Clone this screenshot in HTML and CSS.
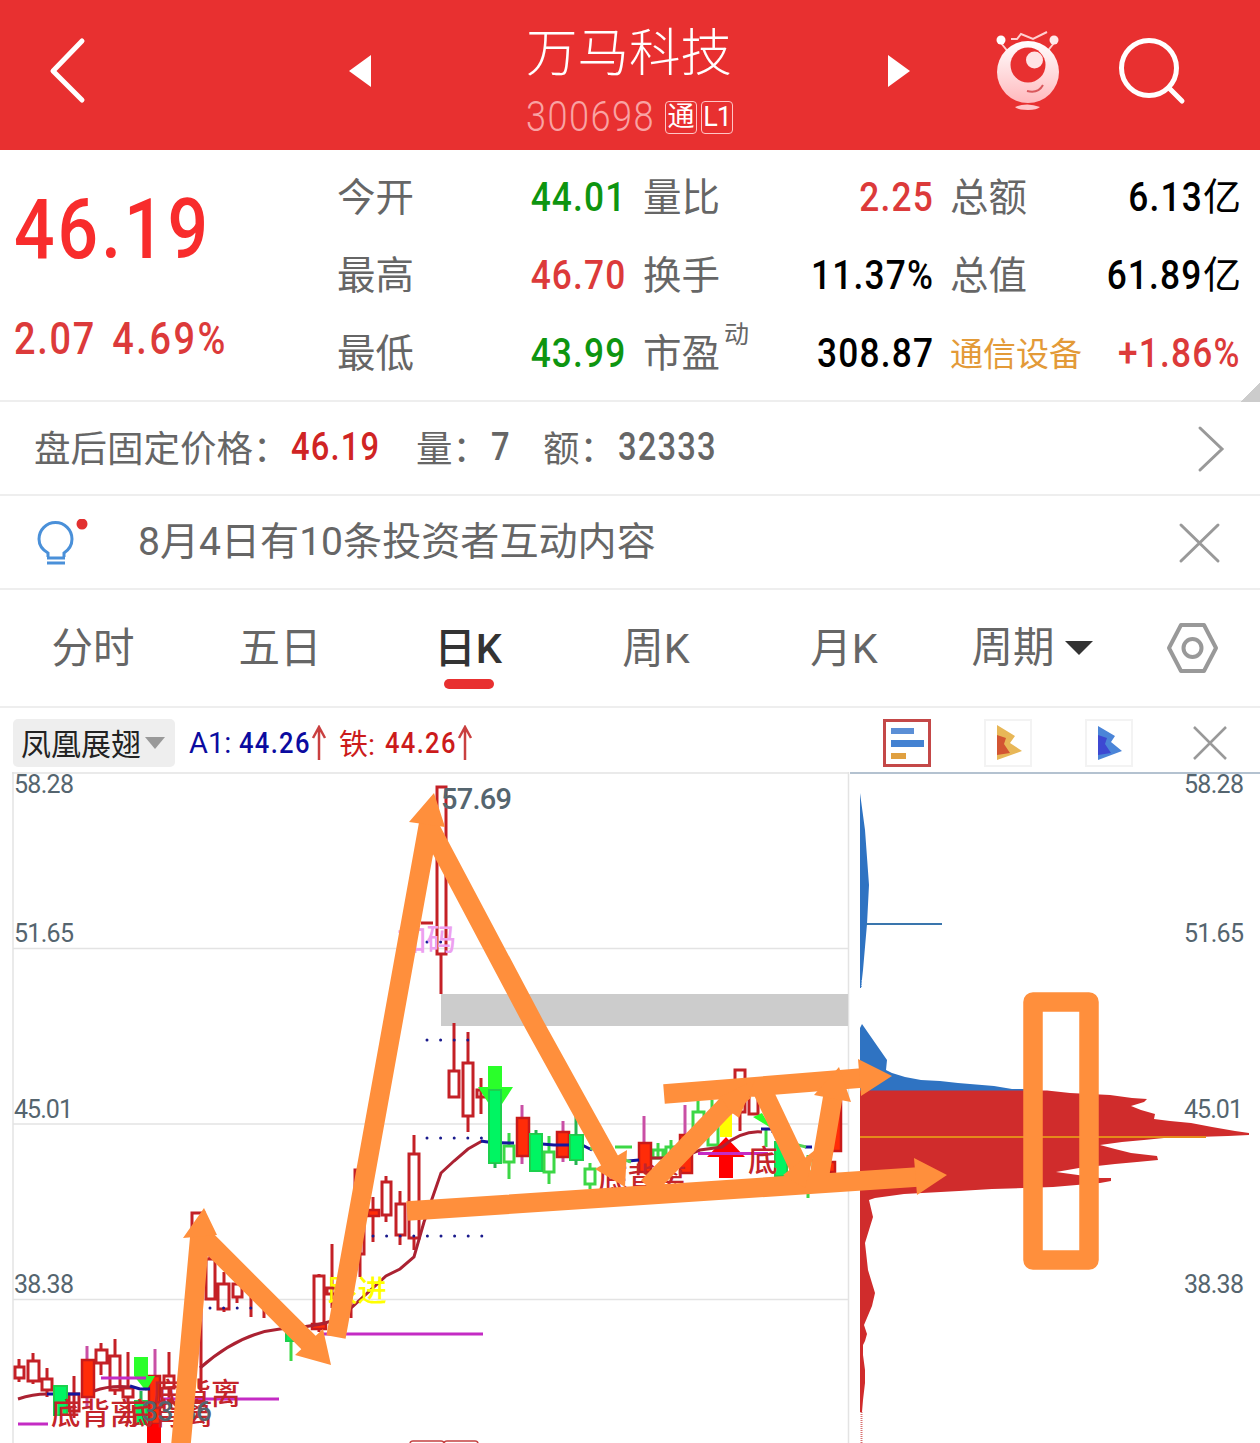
FILE: index.html
```
<!DOCTYPE html>
<html lang="zh-CN">
<head>
    <meta charset="UTF-8">
    <title>万马科技 300698</title>
    <link rel="stylesheet" href="styles.css">
</head>
<body>
<header class="header">
    <svg class="back" width="40" height="70" viewBox="0 0 40 70"><path d="M35 7L6 37L35 66"/></svg>
    <svg class="prev" width="24" height="34" viewBox="0 0 24 34"><path d="M24 1V33L2 17Z"/></svg>
    <div class="title">
        <h1>万马科技</h1>
        <div class="stock-code"><span class="code">300698</span><i class="badge">通</i><i class="badge level">L1</i></div>
    </div>
    <svg class="next" width="24" height="34" viewBox="0 0 24 34"><path d="M1 1V33L23 17Z"/></svg>
    <svg class="robot" width="70" height="84" viewBox="0 0 70 84">
        <defs><linearGradient id="face" x1="0" y1="0" x2="0" y2="1"><stop offset="0" stop-color="#fff"/><stop offset="1" stop-color="#ffb9bd"/></linearGradient></defs>
        <path class="antenna" d="M8 15L16 25M61 15L53 25"/>
        <circle cx="8" cy="12" r="4.5" fill="#fff"/><circle cx="61" cy="12" r="4.5" fill="#ffe9ea"/>
        <path class="zigzag" d="M18 11H24L28 6L40 11L54 4"/>
        <circle cx="35" cy="44" r="31" fill="url(#face)"/>
        <circle cx="35" cy="37" r="17.5" fill="#e83030"/>
        <circle cx="41.500" cy="32" r="8.500" fill="#ffe3e4"/>
        <path class="smile" d="M34 63Q45 66 50 57"/>
        <path d="M22 79Q34 74 47 79Q44 82 35 82Q25 82 22 79Z" fill="#ffc5c8"/>
    </svg>
    <svg class="search" width="70" height="70" viewBox="0 0 70 70"><circle cx="32" cy="32" r="27.500"/><path d="M52 52L65 65"/></svg>
</header>

<section class="quote">
    <div class="price">
        <strong>46.19</strong>
        <span>2.07<b>4.69%</b></span>
    </div>
    <div class="grid">
        <p><label>今开</label><span class="green">44.01</span></p>
        <p><label>量比</label><span class="red">2.25</span></p>
        <p><label>总额</label><span>6.13</span><em>亿</em></p>
        <p><label>最高</label><span class="red">46.70</span></p>
        <p><label>换手</label><span>11.37%</span></p>
        <p><label>总值</label><span>61.89</span><em>亿</em></p>
        <p><label>最低</label><span class="green">43.99</span></p>
        <p><label>市盈<sup>动</sup></label><span>308.87</span></p>
        <p><label class="sector">通信设备</label><span class="red">+1.86%</span></p>
    </div>
    <i class="corner"></i>
</section>

<section class="after">
    <span class="lbl">盘后固定价格：</span><span class="num deal">46.19</span>
    <span class="lbl">量：</span><span class="num vol">7</span>
    <span class="lbl">额：</span><span class="num">32333</span>
    <svg class="icon" width="28" height="48" viewBox="0 0 28 48"><path d="M3 3L25 24L3 45"/></svg>
</section>

<section class="notice">
    <svg class="bulb" width="54" height="50" viewBox="0 0 54 50">
        <path d="M12 38V34C5 30 3 25 3 20A16.500 16.500 0 0 1 36 20C36 25 34 30 28 34V38M11 39H29M11 44H29"/>
        <circle cx="46" cy="5" r="5.500"/>
    </svg>
    <span>8月4日有10条投资者互动内容</span>
    <svg class="icon" width="44" height="44" viewBox="0 0 44 44"><path d="M4 4L41 40M41 4L4 40"/></svg>
</section>

<nav class="tabs">
    <a>分时</a>
    <a>五日</a>
    <a class="active">日K</a>
    <a>周K</a>
    <a>月K</a>
    <a class="more">周期<i></i></a>
    <a class="setting"><svg width="58" height="54" viewBox="0 0 58 54"><path d="M17 4H40L52 27L40 50H17L5 27Z"/><circle cx="28.500" cy="27" r="9"/></svg></a>
</nav>

<div class="toolbar">
    <span class="indicator">凤凰展翅<i></i></span>
    <span class="a1">A1:<b>44.26</b></span><svg class="up" width="16" height="36" viewBox="0 0 16 36"><path d="M8 35V2M2 13L8 2L14 13"/></svg>
    <span class="tie"><em>铁:</em><b>44.26</b></span><svg class="up" width="16" height="36" viewBox="0 0 16 36"><path d="M8 35V2M2 13L8 2L14 13"/></svg>
    <div class="tools">
        <svg width="48" height="48" viewBox="0 0 48 48"><rect class="on" x="1.500" y="1.500" width="45" height="45"/><path fill="#5b8fd6" d="M8 9H31V15H8Z"/><path fill="#4482d2" d="M8 21H41V28H8Z"/><path fill="#e0a040" d="M8 34H23V40H8Z"/></svg>
        <svg width="48" height="48" viewBox="0 0 48 48"><rect class="off" x="1" y="1" width="46" height="46"/><path fill="#e8b757" d="M13 6L31 17L26 24L38 32L13 41Z"/><path fill="#d35532" d="M13 16L22 19L20 25L26 34L13 36Z"/></svg>
        <svg width="48" height="48" viewBox="0 0 48 48"><rect class="off" x="1" y="1" width="46" height="46"/><path fill="#4b85d8" d="M13 7L30 17L26 23L37 32L13 41Z"/><path fill="#3d48d2" d="M13 16L22 19L20 25L26 34L13 36Z"/></svg>
        <svg class="close" width="36" height="36" viewBox="0 0 36 36"><path d="M2 2L34 34M34 2L2 34"/></svg>
    </div>
</div>

<svg class="chart" width="1260" height="671" viewBox="0 772 1260 671">
    <!-- 网格 -->
    <path class="line" d="M13 772V1443M848.500 772V1443M12 773H848M13 948.500H848M13 1124H848M13 1299.500H848"/>
    <path d="M850 773H1260" stroke="#b4c2d0" stroke-width="2"/>
    <path d="M441 994H848V1026H441Z" fill="#ccc"/>
    <g class="axis">
        <text x="14" y="793" textLength="60">58.28</text>
        <text x="14" y="942" textLength="60">51.65</text>
        <text x="14" y="1118" textLength="59">45.01</text>
        <text x="14" y="1293" textLength="60">38.38</text>
        <text x="1184" y="793" textLength="60">58.28</text>
        <text x="1184" y="942" textLength="60">51.65</text>
        <text x="1184" y="1293" textLength="60">38.38</text>
    </g>

    <!-- 空心K线 -->
    <path class="k" d="M19 1359V1367M19 1378V1382M15 1367H24V1378H15ZM33 1353V1361M33 1381V1384M28 1361H39V1381H28ZM47 1368V1379M47 1390V1397M42 1379H52V1390H42ZM74 1376V1418M69 1394H79V1411H69ZM101 1343V1350M101 1363V1375M96 1350H107V1363H96ZM115 1339V1356M115 1390V1395M110 1356H120V1390H110ZM128 1352V1388M128 1397V1404M123 1388H133V1397H123ZM169 1352V1376M169 1388V1405M164 1376H174V1388H164Z"/>
    <path class="k" d="M192 1213H204V1260H192ZM201 1260V1392M210 1256V1259M206 1259H215V1299H206ZM224 1272V1284M218 1284H229V1309H218ZM224 1309V1312M237 1278V1284M233 1284H242V1297H233ZM237 1297V1303M251 1288V1317M246 1292H256M264 1302V1318M319 1274V1276M314 1276H324V1327H314ZM319 1327V1332M332 1244V1308M327 1288H337V1294H327ZM351 1250V1318M360 1200V1277M355 1170H364V1254H355ZM373 1197V1242M386 1176V1182M382 1182H391V1215H382ZM386 1215V1222M400 1191V1204M396 1204H405V1235H396ZM400 1235V1245M414 1135V1154M409 1154H419V1238H409ZM414 1238V1250"/>
    <path class="k" d="M437 787H446V954H437ZM441 954V994M421 923H433M454 1023V1071M449 1071H459V1097H449ZM468 1032V1063M463 1063H473V1116H463ZM468 1116V1132M481 1078V1114M477 1090H486V1097H477ZM735 1070H745V1112H735ZM740 1112V1131M749 1088H758V1114H749Z"/>
    <path class="solid" d="M368 1210H379V1216H368ZM286 1326H292V1329H286ZM312 1324H326V1329H312Z"/>
    <path class="gk" d="M291 1341V1361M509 1133V1146M504 1146H514V1162H504ZM509 1162V1179M549 1136V1152M544 1152H554V1172H544ZM549 1172V1184M590 1163V1169M585 1169H595V1184H585ZM590 1184V1189M615 1147H632M658 1143V1158M653 1150H663V1158H653ZM671 1140V1160M666 1147H676V1160H666ZM698 1100V1112M693 1112H704V1128H693ZM698 1128V1142M712 1100V1125M708 1125H718V1145H708ZM766 1130V1147M808 1155V1198M802 1160H813V1172H802Z"/>

    <!-- 实心K线 -->
    <path class="wick" d="M87 1346V1407M155 1349V1380M522 1105V1164M563 1121V1162M644 1116V1145M685 1105V1140"/>
    <path class="solid" d="M82 1360H94V1397H82ZM149 1376H160V1424H149ZM517 1118H529V1156H517ZM557 1132H569V1157H557ZM639 1143H651V1172H639ZM680 1135H692V1173H680ZM829 1100H841V1151H829ZM829 1162H835V1172H829Z"/>
    <path fill="#f00" d="M147 1424H161V1443H147ZM719 1157V1178H733V1157H745L726 1137L707 1157Z"/>
    <path fill="#2aff2a" d="M134 1357H148V1376H155L146 1391L134 1376ZM488 1066H502V1087H513L502 1104H489L478 1087H488ZM753 1117L762 1113L771 1128Z"/>
    <path fill="#ff0" d="M720 1110H732V1137H720Z"/>

    <!-- 均线 -->
    <path class="ma" d="M18 1399Q33 1394 47 1394M94 1391Q110 1385 130 1387M200 1368C225 1346 250 1332 280 1329C295 1328 315 1327 335 1320L352 1307L386 1276L400 1269L414 1257L424 1222L441 1173L454 1161L468 1149L482 1141M652 1158H680L700 1150L722 1147Q742 1130 762 1132"/>
    <path class="ma blue" d="M47 1394H80M130 1386L140 1389H150M481 1141Q490 1143 514 1143M542 1144L554 1145H582L592 1150M628 1161L639 1160M761 1129H773V1133M805 1147H812"/>
    <path class="ma lime" d="M590 1148L631 1162M790 1143L806 1147"/>
    <path class="gsolid" d="M54 1386H67V1415H54ZM135 1401H147V1424H135ZM286 1331H297V1341H286ZM489 1090H501V1163H489ZM530 1134H542V1171H530ZM570 1135H583V1160H570ZM775 1142H787V1176H775Z"/>
    <path class="gwick" d="M495 1163V1168M536 1130V1134M576 1115V1135M576 1160V1165M141 1391V1401"/>
    <path class="magenta" d="M18 1424H48M101 1378H146M160 1399H279M322 1334H483M698 1153.500H768"/>
    <path class="dots" d="M210 1308H266M427 942H442M427 1040H470M427 1138H484M373 1236H484"/>
    <g class="signal">
        <text x="51" y="1424">底背离</text>
        <text x="152" y="1404">底背离</text>
        <text x="124" y="1424">底背离</text>
        <text x="598" y="1189">底背离</text>
        <text x="748" y="1171">底</text>
        <text class="yellow" x="328" y="1301">跟进</text>
        <text class="pink" x="397" y="950">加码</text>
    </g>
    <g class="axis">
        <text class="low" x="142" y="1421" textLength="70">33.86</text>
        <text class="high" x="441" y="809" textLength="71">57.69</text>
    </g>
    <path class="tags" d="M410 1450V1444Q410 1441 413 1441H441Q444 1441 444 1444Q444 1441 447 1441H475Q478 1441 478 1444V1450"/>

    <!-- 筹码分布 -->
    <path fill="#2f73c2" d="M860 793L865 830L869 885L867 924L863 970L861 988H860ZM860 1028L862 1024L887 1060L886 1070L892 1073L905 1077L921 1080L940 1081L958 1083L994 1086L1012 1089H1030V1092H860Z"/>
    <path d="M866 924H942" stroke="#3a76ad" stroke-width="2"/>
    <path fill="#d02c2c" d="M860 1090.500H1047L1070 1093L1110 1095L1132 1098L1147 1099L1144 1102L1131 1106L1141 1110L1155 1114L1154 1119L1170 1121L1191 1123L1212 1127L1235 1131L1249 1133V1135L1228 1136L1164 1138L1144 1140L1122 1142L1100 1145L1115 1149L1131 1153L1157 1156L1158 1160L1137 1162L1115 1164L1079 1168L1056 1172L1078 1175L1100 1178H1111V1181L1100 1183L1053 1187L992 1189L959 1191L904 1194L875 1198L869 1200L873 1217L865 1243L868 1270L875 1293L872 1306L864 1325L867 1334L865 1341L863 1345V1355L865 1370V1383L863 1400L862 1412H860Z"/>
    <path d="M861.500 1412V1443" stroke="#d87070" stroke-width="2" stroke-dasharray="1 1"/>
    <path d="M861.500 980V988" stroke="#7ba7d8" stroke-width="1" stroke-dasharray="1 1"/>
    <path d="M860 1137H1206" stroke="#e58a1a" stroke-width="2"/>
    <g class="axis"><text x="1184" y="1118" textLength="59">45.01</text></g>

    <!-- 手绘标注 -->
    <g class="mark">
        <path d="M180 1455L200 1235M200 1234L311 1345M336 1337L429 822M428 824L534 1024L612 1165M664 1094L862 1078M407 1211L918 1177M648 1187L724 1108L745 1090M760 1085L797 1163L804 1182M818 1184L833 1096"/>
        <path class="tip" d="M183 1238L204 1208L217 1235ZM295 1355L331 1365L323 1329ZM409 822L434 793L445 827ZM595 1169L625 1187L627 1150ZM858 1059L892 1076L861 1096ZM914 1158L947 1175L917 1195ZM720 1097L755 1080L739 1118L731 1112ZM783 1175L805 1188L815 1150ZM814 1095L839 1067L851 1102Z"/>
        <rect x="1033" y="1002" width="56" height="258"/>
    </g>
</svg>
</body>
</html>
```
FILE: styles.css
```
* {
    box-sizing: border-box;
}

body {
    margin: 0;
    width: 1260px;
    height: 1443px;
    overflow: hidden;
    background: #fff;
    color: #666;
    font-family: Roboto, "Noto Sans CJK SC", sans-serif;
}

h1, p {
    margin: 0;
    font-weight: normal;
}

i, em {
    font-style: normal;
}

svg {
    display: block;
    flex: none;
    fill: none;
}

/* 顶部 */
.header {
    display: flex;
    height: 150px;
    background: #e83030;
    color: #fff;
}

.back {
    margin: 34px 0 0 47px;
    stroke: #fff;
    stroke-width: 5;
    stroke-linecap: round;
    stroke-linejoin: round;
}

.prev {
    margin: 54px 0 0 260px;
    fill: #fff;
}

.title {
    width: 209px;
    margin-left: 155px;
    flex: none;
}

.title h1 {
    margin-top: 24px;
    font-size: 51.5px;
    line-height: 60px;
    font-weight: 300;
    white-space: nowrap;
}

.stock-code {
    display: flex;
    align-items: center;
    height: 36px;
    margin-top: 15px;
    gap: 4px;
}

/* 数字压窄 */
.code {
    width: 135px;
    margin-top: -2px;
    font-size: 42px;
    font-weight: 300;
    letter-spacing: 1.7px;
    transform: scaleX(0.86);
    transform-origin: left;
    color: #f9a3a3;
}

.badge {
    width: 32px;
    height: 33px;
    flex: none;
    border: 1px solid #ffc5c5;
    border-radius: 4px;
    font-size: 27px;
    line-height: 31px;
    text-align: center;
}

.level {
    letter-spacing: -1px;
}

.next {
    margin: 54px 0 0 152px;
    fill: #fff;
}

.robot {
    margin: 28px 0 0 82px;
}

.antenna, .zigzag {
    stroke: #ffd0d0;
    stroke-width: 2;
}

.smile {
    stroke: #d9585c;
    stroke-width: 2;
}

.search {
    margin: 36px 0 0 54px;
    stroke: #fff;
    stroke-width: 5;
    stroke-linecap: round;
}

/* 行情 */
.quote {
    position: relative;
    display: flex;
    height: 252px;
    border-bottom: 2px solid #eee;
}

.price {
    width: 337px;
    padding: 32px 0 0 14px;
    color: #dc3a3a;
}

.price strong {
    display: block;
    font-size: 83px;
    line-height: 96px;
    font-weight: 500;
    letter-spacing: 3.5px;
    transform: scaleX(0.86);
    transform-origin: left;
    color: #f82c2c;
}

.price span {
    display: block;
    margin-top: 34px;
    font-size: 44px;
    line-height: 54px;
    font-weight: 500;
    letter-spacing: 2px;
    transform: scaleX(0.86);
    transform-origin: left;
    white-space: nowrap;
}

.price b {
    margin-left: 19px;
    font-weight: 500;
    letter-spacing: 3px;
}

.grid {
    display: grid;
    grid-template-columns: 290px 291px 291px;
    grid-auto-rows: 78px;
    column-gap: 16px;
    padding-top: 8px;
}

.grid p {
    display: flex;
    align-items: center;
    line-height: 78px;
    white-space: nowrap;
}

.grid label {
    display: flex;
    margin: 1px auto 0 0;
    font-size: 38.5px;
}

.grid span {
    font-size: 41px;
    font-weight: 500;
    letter-spacing: 1.4px;
    transform: scaleX(0.86);
    transform-origin: right;
    color: #000;
}

.grid em {
    font-size: 38px;
    color: #000;
}

.grid sup {
    margin: -19px 0 0 4px;
    font-size: 25px;
}

.grid .sector {
    margin-top: 3px;
    font-size: 33px;
    color: #e39a38;
}

.grid .red {
    color: #dc3a3a;
}

.grid .green {
    color: #0e9510;
}

.corner {
    position: absolute;
    right: 0;
    bottom: -2px;
    width: 20px;
    height: 20px;
    background: linear-gradient(135deg, transparent 50%, #ccc 50%);
}

/* 盘后 / 公告 */
.after, .notice {
    display: flex;
    align-items: center;
    height: 94px;
    padding: 0 36px 4px 34px;
    border-bottom: 2px solid #eee;
    font-size: 36.5px;
    white-space: nowrap;
}

.after .lbl {
    width: 63px;
    margin-right: 12px;
}

.after .lbl:first-child {
    width: 257px;
    margin-right: 0;
}

.num {
    margin-top: 2px;
    font-size: 38px;
    font-weight: 500;
    letter-spacing: 1.4px;
    transform: scaleX(0.86);
    transform-origin: left;
}

.after .deal {
    width: 125px;
    color: #d02424;
}

.after .vol {
    width: 52px;
}

.icon {
    margin-top: 5px;
    margin-left: auto;
    stroke: #999;
    stroke-width: 3;
    stroke-linecap: round;
}

.after .icon {
    margin-right: -1px;
}

.notice .icon {
    margin-right: 3px;
}

.bulb {
    margin: 7px 48px 0 2px;
}

.bulb path {
    stroke: #4a90d9;
    stroke-width: 3;
}

.bulb circle {
    fill: #e23030;
}

.notice span {
    margin-top: -4px;
    font-size: 39.1px;
}

/* 周期切换 */
.tabs {
    display: flex;
    height: 118px;
    border-bottom: 2px solid #eee;
    font-size: 41.5px;
    line-height: 118px;
}

.tabs a {
    position: relative;
    display: flex;
    justify-content: center;
    width: 188px;
}

.tabs a:first-child {
    width: 186px;
}

.tabs .active {
    color: #333;
    font-weight: 500;
}

.active::after {
    content: "";
    position: absolute;
    left: 70px;
    top: 89px;
    width: 50px;
    height: 10px;
    border-radius: 5px;
    background: #e83030;
}

.tabs .more, .tabs .setting {
    align-items: center;
}

.more i {
    margin-left: 10px;
    border: 14px solid transparent;
    border-top-color: #333;
    border-bottom: 0;
}

.tabs .setting {
    width: 134px;
}

.setting svg {
    stroke: #999;
    stroke-width: 4;
    stroke-linejoin: round;
}

/* 指标栏 */
.toolbar {
    display: flex;
    align-items: center;
    height: 64px;
    padding: 6px 33px 0 13px;
    font-size: 29px;
    white-space: nowrap;
}

.indicator {
    display: flex;
    align-items: center;
    width: 162px;
    height: 48px;
    padding: 0 0 3px 8px;
    margin-right: 14px;
    border-radius: 5px;
    background: #eee;
    color: #222;
    font-size: 30px;
}

.indicator i {
    margin: 3px 0 0 4px;
    border: 10px solid transparent;
    border-top: 12px solid #999;
    border-bottom: 0;
}

.toolbar b {
    display: inline-block;
    font-weight: 500;
    letter-spacing: 1.5px;
    transform: scaleX(0.88);
    transform-origin: left;
}

.a1 {
    width: 122px;
    color: #0b0ba0;
}

.a1 b {
    margin-left: 8px;
}

.tie {
    display: flex;
    align-items: center;
    width: 118px;
    margin-left: 12px;
    color: #cc1b1b;
}

.tie em {
    margin: -3px 10px 0 0;
}

.up {
    stroke: #c94040;
    stroke-width: 2.5;
}

.tools {
    display: flex;
    align-items: center;
    gap: 53px;
    margin-left: auto;
}

.tools .on {
    stroke: #c44848;
    stroke-width: 3;
}

.tools .off {
    stroke: #f3f3f3;
    stroke-width: 2;
}

.tools .close {
    margin-left: 6px;
    margin-right: -1px;
    stroke: #999;
    stroke-width: 2.5;
}

/* 图表 */
.line {
    stroke: #e3e3e3;
    stroke-width: 1.5;
}

.axis text {
    fill: #55656f;
    font-size: 25px;
}

.axis .high {
    font-size: 29px;
    font-weight: 500;
}

.axis .low {
    font-size: 28px;
    font-weight: 500;
}

.k {
    stroke: #c42026;
    stroke-width: 3;
}

.gk {
    stroke: #3cd746;
    stroke-width: 3;
}

.wick {
    stroke: #c94fa5;
    stroke-width: 3;
}

.gwick {
    stroke: #25b550;
    stroke-width: 3;
}

.solid {
    fill: #ff2c08;
    stroke: #c81a1a;
    stroke-width: 2.5;
}

.gsolid {
    fill: #00f562;
    stroke: #1dd04d;
    stroke-width: 2;
}

.ma {
    stroke: #ab2232;
    stroke-width: 3;
}

.blue {
    stroke: #15159c;
}

.lime {
    stroke: #55d455;
}

.magenta {
    stroke: #c42bc4;
    stroke-width: 3;
}

.dots {
    stroke: #1a1a8c;
    stroke-width: 3;
    stroke-linecap: round;
    stroke-dasharray: 0 13.6;
}

.signal text {
    fill: #c4242a;
    font-size: 29.5px;
    font-weight: 500;
}

.signal .yellow {
    fill: #ff0;
}

.signal .pink {
    fill: #eda0f0;
}

.tags {
    stroke: #c44040;
    stroke-width: 1.5;
}

.mark {
    stroke: #ff8f3c;
    stroke-width: 19.5;
    stroke-linejoin: round;
}

.mark .tip {
    fill: #ff8f3c;
    stroke: none;
}
```
